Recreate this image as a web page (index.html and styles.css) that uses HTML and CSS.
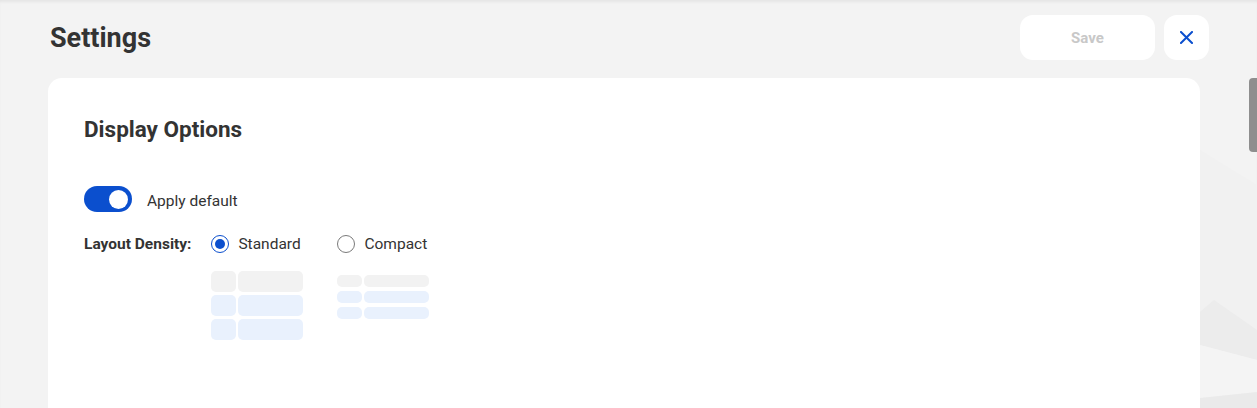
FILE: index.html
```html
<!DOCTYPE html>
<html lang="en">
<head>
<meta charset="utf-8">
<title>Settings</title>
<link rel="stylesheet" href="styles.css">
</head>
<body>
<svg class="bg-deco" width="57" height="408" viewBox="0 0 57 408" aria-hidden="true">
  <polygon points="0,150 57,185 57,408 0,408" fill="#f1f1f1"/>
  <polygon points="0,312 14,300 57,330 57,360 0,345" fill="#ececec"/>
  <polygon points="0,345 57,360 57,392 0,398" fill="#f4f4f4"/>
  <polygon points="0,398 57,392 57,408 0,408" fill="#eaeaea"/>
</svg>
<div class="page">
  <header class="topbar">
    <h1 class="title">Settings</h1>
    <div class="actions">
      <button class="btn-save" type="button">Save</button>
      <button class="btn-close" type="button" aria-label="Close">
        <svg width="13" height="13" viewBox="0 0 13 13"><path d="M1 1L12 12M12 1L1 12" stroke="#0b4fce" stroke-width="2" stroke-linecap="square" fill="none"/></svg>
      </button>
    </div>
  </header>
  <main class="card">
    <h2 class="section-title">Display Options</h2>
    <div class="toggle-row">
      <span class="toggle"><span class="knob"></span></span>
      <span class="toggle-label">Apply default</span>
    </div>
    <div class="density-row">
      <span class="density-label">Layout Density:</span>
      <div class="options">
        <div class="option">
          <label class="radio-line"><span class="radio checked"></span><span>Standard</span></label>
          <div class="preview standard">
            <span class="cell head"></span><span class="cell head"></span>
            <span class="cell"></span><span class="cell"></span>
            <span class="cell"></span><span class="cell"></span>
          </div>
        </div>
        <div class="option">
          <label class="radio-line"><span class="radio"></span><span>Compact</span></label>
          <div class="preview compact">
            <span class="cell head"></span><span class="cell head"></span>
            <span class="cell"></span><span class="cell"></span>
            <span class="cell"></span><span class="cell"></span>
          </div>
        </div>
      </div>
    </div>
  </main>
</div>
<div class="scrollbar"></div>
</body>
</html>
```

FILE: styles.css
```css
html, body {
  margin: 0;
  padding: 0;
  height: 100%;
  overflow: hidden;
}
body {
  background: #f3f3f3;
  font-family: Roboto, "Liberation Sans", Arial, sans-serif;
  color: #333333;
  position: relative;
  box-shadow: inset 0 3px 3px -1px rgba(0,0,0,0.06);
}
.bg-deco {
  position: absolute;
  right: 0;
  top: 0;
  z-index: 0;
}
.page {
  position: relative;
  z-index: 1;
}
.topbar {
  display: flex;
  align-items: center;
  justify-content: space-between;
  padding: 15px 48px 0 50px;
  height: 45px;
}
.title {
  margin: 0;
  font-size: 27px;
  font-weight: 700;
  color: #333333;
}
.actions {
  display: flex;
  gap: 9px;
}
.btn-save {
  width: 135px;
  height: 45px;
  border: none;
  border-radius: 13px;
  background: #ffffff;
  font-family: inherit;
  font-size: 15px;
  font-weight: 700;
  color: #c8c8c8;
  padding: 0;
}
.btn-close {
  width: 45px;
  height: 45px;
  border: none;
  border-radius: 13px;
  background: #ffffff;
  padding: 0;
  display: flex;
  align-items: center;
  justify-content: center;
}
.card {
  display: block;
  margin: 18px 57px 0 48px;
  background: #ffffff;
  border-radius: 14px;
  padding: 37px 36px 80px;
  min-height: 400px;
}
.section-title {
  margin: 0;
  padding-top: 1px;
  font-size: 22.5px;
  font-weight: 700;
  line-height: 26px;
  color: #333333;
}
.toggle-row {
  display: flex;
  align-items: center;
  gap: 15px;
  margin-top: 44px;
}
.toggle {
  width: 48px;
  height: 26px;
  border-radius: 13px;
  background: #0b4fce;
  display: flex;
  align-items: center;
  justify-content: flex-end;
  padding: 0 4px;
  box-sizing: border-box;
}
.knob {
  width: 19px;
  height: 19px;
  border-radius: 50%;
  background: #ffffff;
}
.toggle-label {
  font-size: 15.5px;
  line-height: 18px;
  padding-top: 4px;
  color: #333333;
}
.density-row {
  display: flex;
  align-items: flex-start;
  gap: 20px;
  margin-top: 23px;
}
.density-label {
  font-size: 15.5px;
  font-weight: 700;
  line-height: 18px;
  color: #333333;
}
.options {
  display: flex;
  gap: 34px;
}
.option {
  display: flex;
  flex-direction: column;
}
.radio-line {
  display: flex;
  align-items: center;
  gap: 9px;
  font-size: 15.5px;
  line-height: 18px;
  color: #333333;
}
.radio {
  width: 18px;
  height: 18px;
  box-sizing: border-box;
  border-radius: 50%;
  border: 1px solid #7a7a7a;
  background: #ffffff;
  display: flex;
  align-items: center;
  justify-content: center;
  flex-shrink: 0;
}
.radio.checked {
  border: 1.5px solid #0b4fce;
}
.radio.checked::after {
  content: "";
  width: 10px;
  height: 10px;
  border-radius: 50%;
  background: #0b4fce;
}
.preview {
  display: grid;
  grid-template-columns: 25px 65px;
  column-gap: 2px;
}
.preview.standard {
  margin-top: 18px;
  grid-auto-rows: 21px;
  row-gap: 3px;
}
.preview.compact {
  margin-top: 22px;
  grid-auto-rows: 12px;
  row-gap: 4px;
}
.cell {
  background: #e9f1fd;
  border-radius: 5px;
}
.cell.head {
  background: #f2f2f2;
}
.scrollbar {
  position: absolute;
  right: 0;
  top: 78px;
  width: 8px;
  height: 74px;
  border-radius: 4px 0 0 4px;
  background: #8e8e8e;
  z-index: 2;
}
```
